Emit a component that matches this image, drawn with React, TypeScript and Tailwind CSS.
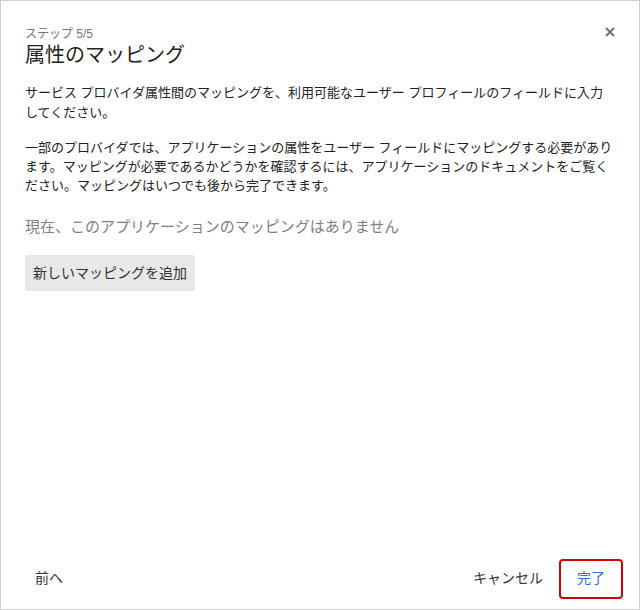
import React from "react";

const font = {
  fontFamily: '"Liberation Sans", "Noto Sans CJK JP", sans-serif',
};

function App() {
  return (
    <div
      className="w-[640px] h-[610px] bg-white border border-[#cfcfcf] flex flex-col text-[#222]"
      style={font}
    >
      <div className="flex items-start justify-between pl-6 pr-6 pt-[25px]">
        <div>
          <div className="text-[12px] leading-[16px] text-[#757575]">ステップ 5/5</div>
          <h1 className="text-[20px] leading-[28px] -mt-[1px]">属性のマッピング</h1>
        </div>
        <button className="mt-[1px] text-[#757575]" aria-label="閉じる">
          <svg width="10" height="10" viewBox="0 0 10 10" className="block">
            <path d="M1 1 L9 9 M9 1 L1 9" stroke="currentColor" strokeWidth="2.2" />
          </svg>
        </button>
      </div>

      <div className="px-6 pt-[14px] flex-1">
        <p className="text-[13px] leading-[20px]">
          サービス プロバイダ属性間のマッピングを、利用可能なユーザー プロフィールのフィールドに入力してください。
        </p>
        <p className="text-[13px] leading-[19px] mt-[15px]">
          一部のプロバイダでは、アプリケーションの属性をユーザー フィールドにマッピングする必要があります。マッピングが必要であるかどうかを確認するには、アプリケーションのドキュメントをご覧ください。マッピングはいつでも後から完了できます。
        </p>
        <p className="text-[15px] leading-[22px] text-[#808080] mt-[21px]">
          現在、このアプリケーションのマッピングはありません
        </p>
        <button className="mt-[17px] h-9 px-2 rounded-[2px] bg-[#e8e8e8] text-[14px] text-[#333]">
          新しいマッピングを追加
        </button>
      </div>

      <div className="flex items-center justify-between pl-6 pr-4 pb-[10px]">
        <button className="h-10 px-[10px] pb-[2px] text-[14px] text-[#333]">前へ</button>
        <div className="flex items-center">
          <button className="h-10 px-4 pb-[2px] text-[14px] text-[#333]">キャンセル</button>
          <button className="h-10 px-4 pb-[2px] text-[14px] text-[#3b6fd6] border-2 border-[#d40000] rounded-[4px]">
            完了
          </button>
        </div>
      </div>
    </div>
  );
}

export default App;
